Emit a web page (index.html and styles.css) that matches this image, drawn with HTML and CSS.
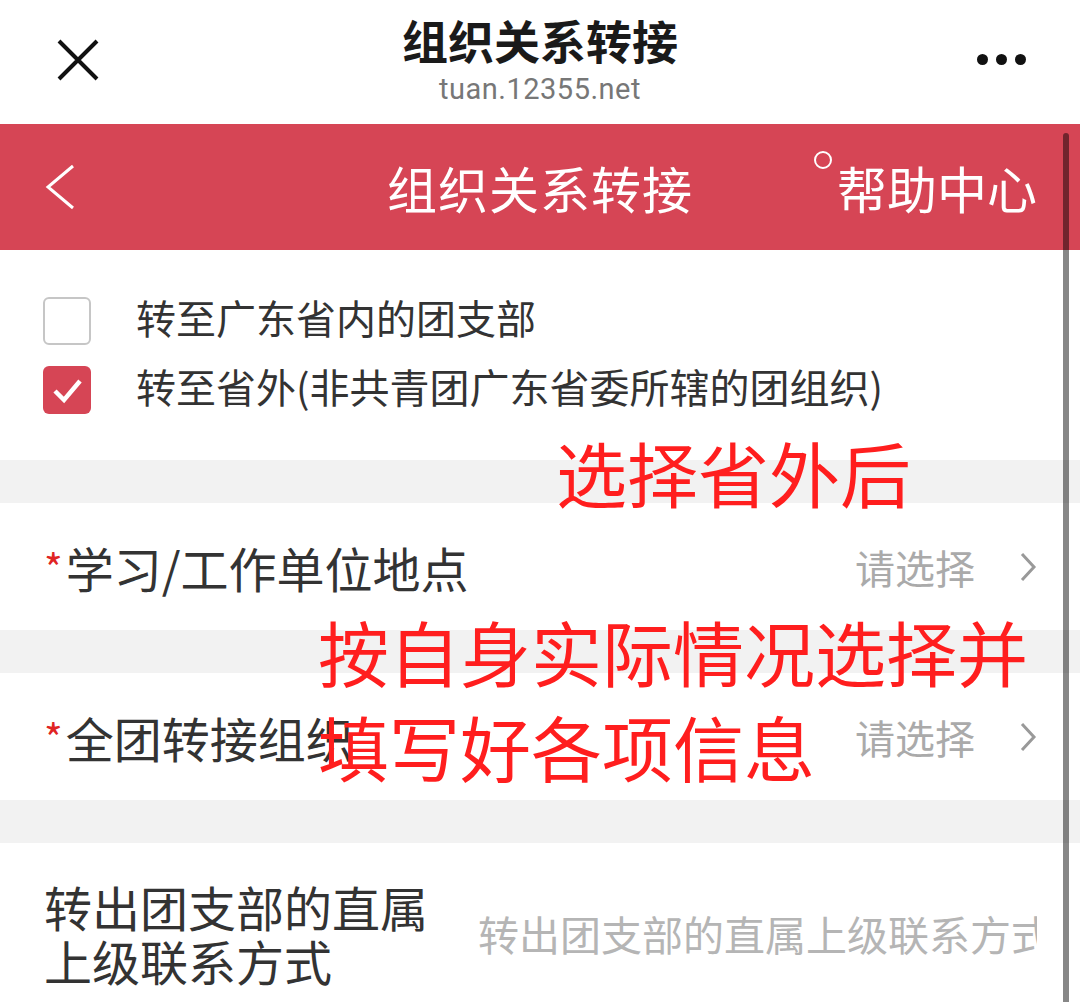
FILE: index.html
```
<!DOCTYPE html>
<html lang="zh-CN">
<head>
  <meta charset="UTF-8">
  <title>组织关系转接</title>
  <link rel="stylesheet" href="styles.css">
</head>
<body>

  <!-- WeChat style browser header -->
  <div class="topbar">
    <div class="close">
      <svg width="42" height="42" viewBox="0 0 42 42"><path d="M2 2 L40 40 M40 2 L2 40" stroke="#111" stroke-width="4" fill="none"/></svg>
    </div>
    <div class="titles">
      <div class="page-title">组织关系转接</div>
      <div class="page-url">tuan.12355.net</div>
    </div>
    <div class="more">
      <span class="dot"></span><span class="dot"></span><span class="dot"></span>
    </div>
  </div>

  <div class="navbar">
    <div class="back">
      <svg width="32" height="46" viewBox="0 0 32 46"><path d="M29 2 L4 23 L29 44" stroke="#fff" stroke-width="3" fill="none"/></svg>
    </div>
    <div class="nav-title">组织关系转接</div>
    <div class="help"><span class="ring"></span>帮助中心</div>
  </div>

  <div class="content">
    <div class="options">
      <div class="option">
        <span class="box"></span>
        <span class="option-text">转至广东省内的团支部</span>
      </div>
      <div class="option">
        <span class="box checked">
          <svg width="48" height="48" viewBox="0 0 48 48"><path d="M12 25 L21 34 L37 15" stroke="#fff" stroke-width="4.5" fill="none"/></svg>
        </span>
        <span class="option-text">转至省外(非共青团广东省委所辖的团组织)</span>
      </div>
    </div>

    <div class="gap"></div>

    <div class="row">
      <div class="label"><span class="star">*</span>学习/工作单位地点</div>
      <div class="value">请选择
        <svg class="arrow" width="18" height="32" viewBox="0 0 18 32"><path d="M3 3 L15 16 L3 29" stroke="#999" stroke-width="3" fill="none"/></svg>
      </div>
    </div>

    <div class="gap"></div>

    <div class="row">
      <div class="label"><span class="star">*</span>全团转接组织</div>
      <div class="value">请选择
        <svg class="arrow" width="18" height="32" viewBox="0 0 18 32"><path d="M3 3 L15 16 L3 29" stroke="#999" stroke-width="3" fill="none"/></svg>
      </div>
    </div>

    <div class="gap"></div>

    <div class="row tall">
      <div class="label wrap">转出团支部的直属上级联系方式</div>
      <div class="placeholder">转出团支部的直属上级联系方式</div>
    </div>
  </div>

  <div class="scrollbar"></div>

  <!-- red annotations written over the screenshot -->
  <div class="note note-top">选择省外后</div>
  <div class="note note-mid">
    <div>按自身实际情况选择并</div>
    <div>填写好各项信息</div>
  </div>

</body>
</html>
```

FILE: styles.css
```
body {
  margin: 0;
  padding: 0;
  width: 1080px;
  height: 1002px;
  overflow: hidden;
  position: relative;
  background-color: #fff;
  font-family: "Noto Sans CJK SC", "Noto Sans", sans-serif;
  color: #333;
}

.topbar {
  height: 124px;
  display: flex;
  align-items: center;
  justify-content: space-between;
  padding: 0 54px 0 57px;
  box-sizing: border-box;
  position: relative;
}

.close {
  width: 42px;
  height: 42px;
  margin-top: -4px;
}

.titles {
  position: absolute;
  left: 0;
  right: 0;
  top: 10px;
  text-align: center;
}

.page-title {
  font-size: 46px;
  line-height: 58px;
  font-weight: bold;
  color: #1a1a1a;
}

.page-url {
  font-family: Roboto, "Liberation Sans", sans-serif;
  font-size: 29px;
  line-height: 34px;
  margin-top: 4px;
  color: #777;
  letter-spacing: 0.5px;
}

.more {
  display: flex;
  gap: 8px;
  margin-top: -6px;
}

.dot {
  width: 11px;
  height: 11px;
  border-radius: 50%;
  background-color: #111;
}

.navbar {
  height: 126px;
  background-color: #d64555;
  color: #fff;
  display: flex;
  align-items: center;
  padding: 0 43px 0 44px;
  position: relative;
}

.back {
  width: 32px;
  height: 46px;
}

.nav-title {
  position: absolute;
  left: 0;
  right: 0;
  text-align: center;
  font-size: 50px;
  line-height: 60px;
  letter-spacing: 1px;
}

.help {
  margin-left: auto;
  font-size: 50px;
  line-height: 60px;
  position: relative;
}

.ring {
  display: inline-block;
  width: 14px;
  height: 14px;
  border: 2px solid #fff;
  border-radius: 50%;
  vertical-align: top;
  margin-top: -6px;
  margin-right: 5px;
}

.options {
  padding: 47px 43px 46px 43px;
  display: flex;
  flex-direction: column;
  gap: 21px;
}

.option {
  display: flex;
  align-items: center;
  height: 48px;
}

.box {
  width: 48px;
  height: 48px;
  box-sizing: border-box;
  border: 2px solid #c6c6c6;
  border-radius: 6px;
  margin-right: 45px;
  flex-shrink: 0;
}

.box.checked {
  border: none;
  background-color: #d64555;
}

.box svg {
  display: block;
}

.option-text {
  font-size: 40px;
  line-height: 48px;
  color: #333;
  margin-top: -8px;
}

.gap {
  height: 43px;
  background-color: #f2f2f2;
}

.row {
  height: 127px;
  display: flex;
  align-items: center;
  justify-content: space-between;
  padding: 0 43px 0 44px;
}

.row.tall {
  height: 160px;
  align-items: flex-start;
  padding-top: 36px;
  box-sizing: border-box;
}

.label {
  font-size: 48px;
  line-height: 56px;
  color: #333;
  white-space: nowrap;
}

.label.wrap {
  white-space: normal;
  width: 400px;
  line-height: 54px;
}

.star {
  color: #e02424;
  font-size: 40px;
  vertical-align: top;
  margin-right: 3px;
}

.value {
  display: flex;
  align-items: center;
  font-size: 40px;
  line-height: 48px;
  color: #aaa;
}

.arrow {
  margin-left: 44px;
}

.placeholder {
  font-size: 41px;
  line-height: 48px;
  color: #b5b5b5;
  white-space: nowrap;
  overflow: hidden;
  width: 559px;
  margin-top: 30px;
}

.scrollbar {
  position: absolute;
  left: 1063px;
  top: 133px;
  bottom: 0;
  width: 6px;
  border-radius: 3px 3px 0 0;
  background-color: rgba(0, 0, 0, 0.47);
}

.note {
  position: absolute;
  color: #ff1e1e;
  font-size: 71px;
  line-height: 95px;
  white-space: nowrap;
}

.note-top {
  left: 556px;
  top: 424px;
}

.note-mid {
  left: 318px;
  top: 603px;
}
```
